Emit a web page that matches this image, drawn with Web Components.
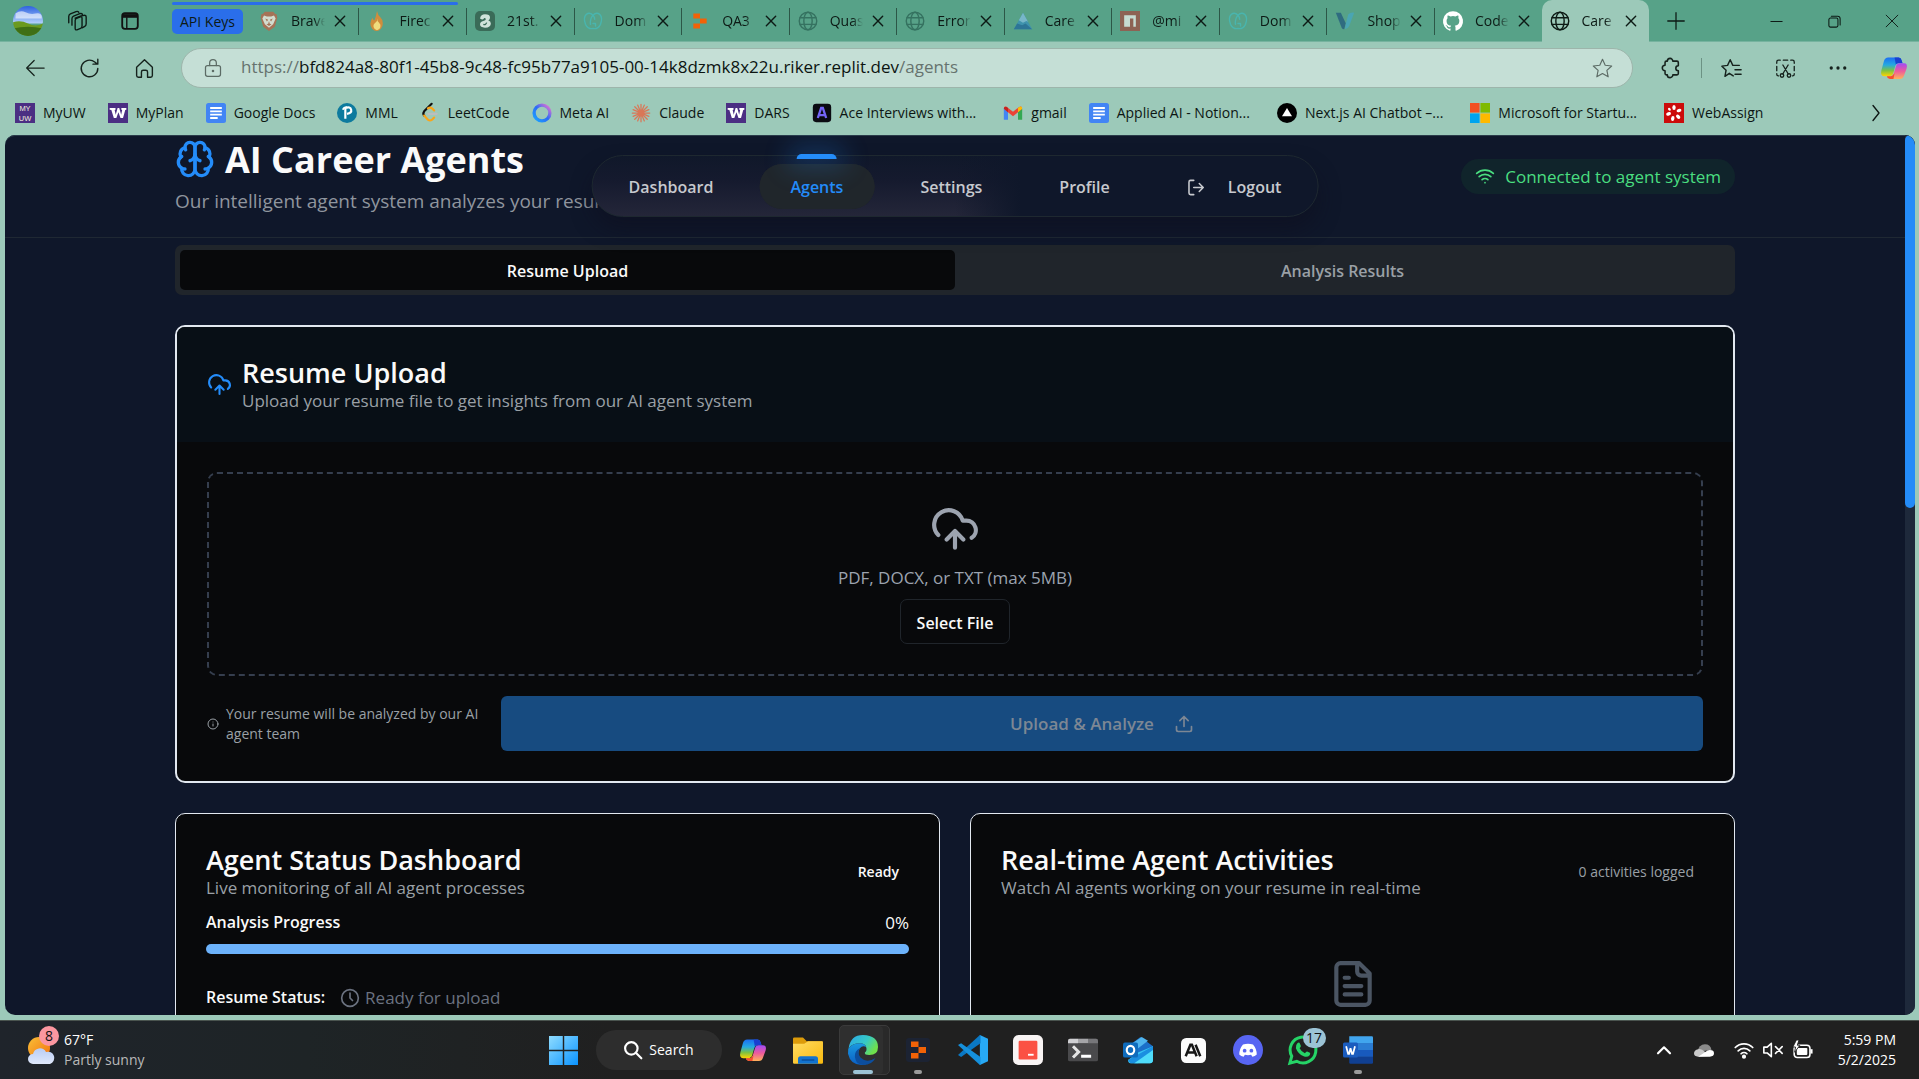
<!DOCTYPE html>
<html lang="en">
<head>
<meta charset="utf-8">
<title>AI Career Agents</title>
<style>
  html, body { margin: 0; height: 100%; }
  body { font-family: "Open Sans", "Noto Sans", sans-serif; font-size: 14px; background: #9cc9b9; overflow: hidden; }
</style>
</head>
<body>
<desktop-shell></desktop-shell>
<script>
const line = (body, w = 2, vb = '0 0 24 24') =>
  `<svg viewBox="${vb}" fill="none" stroke="currentColor" stroke-width="${w}" stroke-linecap="round" stroke-linejoin="round">${body}</svg>`;
const fill = (body, vb = '0 0 24 24') => `<svg viewBox="${vb}">${body}</svg>`;

const copilot = `<defs><linearGradient id="a" x1="0" y1="0" x2="0" y2="1"><stop offset="0" stop-color="#1b6ef3"/><stop offset=".4" stop-color="#25a9e0"/><stop offset=".7" stop-color="#7dc242"/><stop offset="1" stop-color="#ffd400"/></linearGradient>
<linearGradient id="b" x1="0" y1="0" x2="0" y2="1"><stop offset="0" stop-color="#a24bf5"/><stop offset=".5" stop-color="#ee5b9b"/><stop offset="1" stop-color="#ffb35a"/></linearGradient></defs>
<path d="M7 3h9q2 0 2.600 2.500l.7 2.500h-3.500q-2 0-2.700 2.300l-1.700 6q-.9 2.700-3.400 2.700H3.500Q0 19 1.200 14L3.400 6Q4.200 3 7 3z" fill="url(#a)"/>
<path d="M12.500 3H16q2 0 2.600 2.500l.7 2.500h-3.500q-1.500 0-2.200 1.200z" fill="#1a3fd0"/>
<path d="M17 21.500H8.500q-2 0-2.600-2.500h3.200q2 0 2.700-2.300l1.800-6Q14.400 8 17 8h3.500Q24 8 22.800 12.500l-2.200 6Q19.800 21.500 17 21.500z" fill="url(#b)"/>
<path d="M5.900 19q.6 2.500 2.600 2.500h3l1-5-1 1q-.8 1.500-2.400 1.500z" fill="#f4502e"/>`;

const ICONS = {
  brain: line('<path d="M12 5a3 3 0 1 0-5.997.125 4 4 0 0 0-2.526 5.770 4 4 0 0 0 .556 6.588A4 4 0 1 0 12 18Z"/><path d="M12 5a3 3 0 1 1 5.997.125 4 4 0 0 1 2.526 5.770 4 4 0 0 1-.556 6.588A4 4 0 1 1 12 18Z"/><path d="M15 13a4.500 4.500 0 0 1-3-4 4.500 4.500 0 0 1-3 4"/><path d="M17.599 6.500a3 3 0 0 0 .399-1.375M6.003 5.125A3 3 0 0 0 6.401 6.500M3.477 10.896a4 4 0 0 1 .585-.396M19.938 10.500a4 4 0 0 1 .585.396M6 18a4 4 0 0 1-1.967-.516M19.967 17.484A4 4 0 0 1 18 18"/>'),
  cloudup: line('<path d="M12 13v8M4 14.899A7 7 0 1 1 15.710 8h1.790a4.500 4.500 0 0 1 2.500 8.242M8 17l4-4 4 4"/>'),
  upload: line('<path d="M21 15v4a2 2 0 0 1-2 2H5a2 2 0 0 1-2-2v-4M17 8l-5-5-5 5M12 3v12"/>'),
  info: line('<circle cx="12" cy="12" r="10"/><path d="M12 16v-4M12 8h.01"/>'),
  clock: line('<circle cx="12" cy="12" r="10"/><path d="M12 6v6l3 3"/>'),
  file: line('<path d="M15 2H6a2 2 0 0 0-2 2v16a2 2 0 0 0 2 2h12a2 2 0 0 0 2-2V7ZM14 2v4a2 2 0 0 0 2 2h4M10 9H8M16 13H8M16 17H8"/>'),
  wifi: line('<path d="M12 20h.01M2 8.820a15 15 0 0 1 20 0M5 12.859a10 10 0 0 1 14 0M8.500 16.429a5 5 0 0 1 7 0"/>'),
  logout: line('<path d="M9 21H5a2 2 0 0 1-2-2V5a2 2 0 0 1 2-2h4M16 17l5-5-5-5M21 12H9"/>'),
  avatar: fill('<defs><linearGradient id="s" x1="0" y1="0" x2="0" y2="1"><stop offset="0" stop-color="#2d62e0"/><stop offset="1" stop-color="#b5d2fb"/></linearGradient><clipPath id="c"><circle cx="12" cy="12" r="12"/></clipPath></defs><g clip-path="url(#c)"><path d="M0 0h24v14H0z" fill="url(#s)"/><path d="M2 6q4-3 8-1t8 1 5 2v2H2zM5 9q6-2 10 0z" fill="#fff" opacity=".6"/><path d="M0 13q6-2 12 1t12 0v10H0z" fill="#6b9a1f"/><path d="M0 18q12-3 24 0v6H0z" fill="#3f6f15"/></g>'),
  stack: line('<path d="M10 9 16.500 6.500l3-.7q2.500-.3 2.500 2V15q0 2-1.500 2.800l-3 1.700"/><path d="M6.500 16.500V9.500q0-2 1.800-2.800L15 4q2-.7 3 .8M3 14V7q0-2 1.800-2.800L11 1.700q2-.7 3 .8"/><path d="M10 11.500q0-1.800 1.600-2.400l4-1.500q1.900-.6 1.900 1.400v8.500q0 1.800-1.600 2.500l-4 1.600Q10 22.200 10 20.200z"/>', 1.500),
  panel: fill('<rect x="3.500" y="3.500" width="17" height="17" rx="3" fill="none" stroke="#111" stroke-width="2"/><path d="M3.500 4.500h17v4h-17z" fill="#111"/><path d="M8.500 8v12" stroke="#111" stroke-width="1.500"/>'),
  x: line('<path d="M4 4l16 16M20 4 4 20"/>', 2.400),
  plus: line('<path d="M12 1v22M1 12h22"/>', 1.700),
  min: line('<path d="M3 12h18"/>', 1.700),
  restore: line('<rect x="3" y="6.500" width="14.500" height="14.500" rx="2.500"/><path d="M7 3.500h10q4 0 4 4v10"/>', 1.700),
  winx: line('<path d="M2 2l20 20M22 2 2 22"/>', 1.600),
  back: line('<path d="M23 12H2M11 3 2 12l9 9"/>', 1.500),
  reload: line('<path d="M21.500 12a9.500 9.500 0 1 1-3.500-7.400L21 7M21.500 1.500V7H16"/>', 1.600),
  home: line('<path d="M3 10.500 12 2l9 8.500V20q0 2-2 2h-3.500v-6q0-2-2-2h-3q-2 0-2 2v6H5q-2 0-2-2z"/>', 1.600),
  lock: line('<rect x="3" y="9" width="18" height="13" rx="2.500"/><path d="M8 9V6a4 4 0 0 1 8 0v3"/><circle cx="12" cy="15.500" r=".8" fill="currentColor"/>', 1.500),
  star: line('<path d="M12 1.500 15.100 8.300l7.400.8-5.500 5 1.500 7.400L12 17.800l-6.500 3.700L7 14.100l-5.500-5 7.400-.8z"/>', 1.300),
  puzzle: line('<path d="M8 4.500a3 3 0 0 1 6 0h4.500q1.500 0 1.500 1.500v3.500a2.700 2.700 0 1 0 0 5.500V18q0 1.500-1.500 1.500H14a3 3 0 0 1-6 0H7q-1.500 0-1.500-1.500v-3a3 3 0 0 1 0-6V6q0-1.500 1.500-1.500z"/>', 1.700),
  favs: line('<path d="M14 20.500 9.500 17.500 4.500 21l1.300-7L1 9.300l6.500-.9L10.500 2l3 6.400H21M16 13.500h7M16 18.500h7"/>', 1.600),
  snip: line('<path d="M2 6V4.500Q2 2.500 4 2.500h2M9.500 2.500h5M18 2.500h2q2 0 2 2V6M22 9.500v5M2 9.500v5M2 18v.5q0 2 2 2M22 18v.5q0 2-2 2M9 8l6 10M15 8 9 18"/><circle cx="8" cy="20" r="2"/><circle cx="16" cy="20" r="2"/>', 1.500),
  dots: fill('<g fill="#16221d"><circle cx="3" cy="12" r="2.200"/><circle cx="12" cy="12" r="2.200"/><circle cx="21" cy="12" r="2.200"/></g>'),
  copilot: fill(copilot),
  chevron: line('<path d="M8 2l8 10-8 10"/>', 1.800),
  globe: line('<circle cx="12" cy="12" r="10.500"/><ellipse cx="12" cy="12" rx="5" ry="10.500"/><path d="M2.500 8h19M2.500 16h19"/>', 1.700),
  brave: fill('<path d="M7 1h10l2.500 2.500H21L22 8l-3 11-7 5-7-5L2 8l1-4.500h1.500z" fill="#a57357"/><path d="M6 5.500l3.500 1h5l3.500-1L20 9l-3 7-2.500 2L12 20l-2.500-2L7 16 4 9z" fill="#d3ddd0"/><path d="M7.500 9l3.500 1.500-1.500 2zM16.500 9 13 10.500l1.500 2zM12 12l1 3.500h-2zM9 16l3-1 3 1-3 2z" fill="#a57357"/>'),
  fire: fill('<path d="M12 0q1 5 4 7.500t3 7.500a7.500 9 0 0 1-15 0q0-4 3-7 0 3 2 3 2-5 3-11z" fill="#cf8d3c"/><path d="M12 9q0 3 2.500 5t1.500 5.500-4 3.500-4-3.500T10 14t2-5z" fill="#f0dc7d"/>'),
  d21: fill('<rect width="24" height="24" rx="6" fill="#3a6b58"/><path d="M6 9q1-5 6-5 6 0 6 4 0 2-2 3.500 3 .5 3 3.500 0 5-7 5-6 0-6-4 0-3 4-4 3-.5 3-2t-2-1.500q-1 3-5 .5z" fill="#cfe3da"/><path d="M10 16q3 1 4-2" stroke="#3a6b58" stroke-width="1.500" fill="none"/>'),
  godaddy: line('<path d="M12 21Q6 22 3 16 0 8 4 4q4-3 8 1 2 2 2 5M12 21q6 1 9-5 3-8-1-12-4-3-8 1-4 5-3 11"/><path d="M12 15h3v3"/>', 1.700),
  replit: fill('<g fill="#f26207"><path d="M4 3h8v6H4zM12 9h8v6h-8zM4 15h8v6H4z"/></g>'),
  tri: fill('<path d="M12 2 23 22H1z" fill="#3f93ad"/><path d="M12 2 7 11l5 3 4-2 2 1z" fill="#77b6c9"/><path d="M1 22 5 15l6 2 4-2 8 7z" fill="#2d7596"/>'),
  npm: fill('<rect width="24" height="24" fill="#8d6354"/><path d="M5 5h14v14h-3V9h-4v10H5z" fill="#c6dcd2"/>'),
  vee: fill('<path d="M1 2h6l6 13-2 7q-2 0-3-2z" fill="#2f6c80"/><path d="M13 15 16 4q3-3 7-2l-6 16q-2 4-5 4z" fill="#4aa5b3"/>'),
  github: fill('<path fill="#fff" d="M12 .3a12 12 0 0 0-3.800 23.400c.6.100.8-.3.800-.6v-2c-3.300.7-4-1.600-4-1.600-.6-1.400-1.400-1.800-1.400-1.800-1-.7.100-.7.100-.7 1.200 0 1.900 1.200 1.900 1.200 1 1.800 2.800 1.300 3.500 1 0-.8.400-1.300.7-1.600-2.700-.3-5.500-1.300-5.500-6 0-1.200.5-2.300 1.300-3.100-.2-.4-.6-1.600 0-3.200 0 0 1-.3 3.400 1.200a11.500 11.500 0 0 1 6 0c2.300-1.500 3.300-1.200 3.300-1.200.6 1.600.2 2.800 0 3.200.9.800 1.300 1.900 1.300 3.200 0 4.600-2.800 5.600-5.500 5.900.5.400.9 1 .9 2.200v3.300c0 .3.100.7.800.6A12 12 0 0 0 12 .3"/>'),
  uw: fill('<rect width="24" height="24" fill="#4b2e83"/><g font-size="9" fill="#f3eedd" text-anchor="middle" font-family="Liberation Sans"><text x="12" y="10">MY</text><text x="12" y="21">UW</text></g>'),
  w: fill('<rect width="24" height="24" fill="#4b2e83"/><path d="M2 6h7v2l-1 .3 1.300 5.700L11.500 6h2l2.300 8 1.200-5.700L16 8V6h6v2l-1.300.4L18 18h-3l-2.500-7L10 18H7L4 8.400 2 8z" fill="#fff"/>'),
  docs: fill('<rect width="24" height="24" rx="3" fill="#4285f4"/><path d="M5 6h14M5 10h14M5 14h14M5 18h9" stroke="#fff" stroke-width="2.200"/>'),
  pearson: fill('<circle cx="12" cy="12" r="12" fill="#0d7a9e"/><path d="M10 19V6q6-2 7 2t-5 5" fill="none" stroke="#fff" stroke-width="2.600"/><path d="M7 8q1-3 5-3" stroke="#fff" stroke-width="2" fill="none"/>'),
  leet: fill('<g fill="none" stroke-width="2.600" stroke-linecap="round"><path d="M14 1 5 10q-2 2.500 0 5" stroke="#111"/><path d="M5 15l4.500 5q2.500 2 5 0l2.500-2.500M17 9l-2.500-2.500q-2.500-2-5 0" stroke="#f9a51a"/><path d="M10 13h10" stroke="#bdbdbd"/></g>'),
  meta: fill('<defs><linearGradient id="m" x1="0" y1="1" x2="1" y2="0"><stop offset="0" stop-color="#1aa7ff"/><stop offset=".5" stop-color="#2a6cf6"/><stop offset="1" stop-color="#f472d0"/></linearGradient></defs><circle cx="12" cy="12" r="9.500" fill="none" stroke="url(#m)" stroke-width="4"/>'),
  claude: fill('<g stroke="#d97757" stroke-width="1.500" stroke-linecap="round"><path d="M12 1.500v21M1.500 12h21M4.500 4.500l15 15M19.500 4.500l-15 15M8 2.500l8 19M16 2.500 8 21.500M2.500 8l19 8M21.500 8l-19 8"/></g>'),
  ace: fill('<rect x="1" y="1" width="22" height="22" rx="4" fill="#0b0b12"/><path d="M7 18l4-12h2l4 12M9 14.500h6" fill="none" stroke="#7464f5" stroke-width="2.800"/>'),
  gmail: fill('<path d="M1 7v13h5V10z" fill="#4285f4"/><path d="M23 7v13h-5V10z" fill="#34a853"/><path d="M1 7q0-4 4-2l7 5.500L19 5q4-2 4 2l-5 4-6 5-6-5z" fill="#ea4335"/><path d="M18 6l1-1q4-2 4 2l-5 4z" fill="#fbbc04"/><path d="M1 7q0-3 3-2.500L6 6v5z" fill="#c5221f"/>'),
  next: fill('<circle cx="12" cy="12" r="12" fill="#000"/><path d="M12 6l6 10H6z" fill="#fff"/>'),
  ms: fill('<path d="M0 0h11.500v11.500H0z" fill="#f25022"/><path d="M12.500 0H24v11.500H12.500z" fill="#7fba00"/><path d="M0 12.500h11.500V24H0z" fill="#00a4ef"/><path d="M12.500 12.500H24V24H12.500z" fill="#ffb900"/>'),
  wa: fill('<rect width="24" height="24" fill="#cc0a0a"/><g fill="#fff"><ellipse cx="12" cy="5.500" rx="2" ry="3"/><ellipse cx="18" cy="9" rx="3" ry="2" transform="rotate(-20 18 9)"/><ellipse cx="17" cy="16.500" rx="3" ry="2" transform="rotate(45 17 16.500)"/><ellipse cx="10.500" cy="18.500" rx="2" ry="3" transform="rotate(10 10.500 18.500)"/><ellipse cx="5.500" cy="13" rx="3" ry="2" transform="rotate(-20 5.500 13)"/><ellipse cx="6.500" cy="7.500" rx="1.500" ry="2" transform="rotate(-40 6.500 7.500)"/></g>'),
  weather: fill('<defs><linearGradient id="sun" x1="0" y1="0" x2="1" y2="1"><stop offset="0" stop-color="#f9c037"/><stop offset="1" stop-color="#f2700f"/></linearGradient><linearGradient id="cl" x1="0" y1="0" x2="0" y2="1"><stop offset="0" stop-color="#b9cdf5"/><stop offset="1" stop-color="#dfe8fb"/></linearGradient></defs><circle cx="12" cy="12" r="11" fill="url(#sun)"/><path d="M6 28a5 5 0 0 1 0-10 7 7 0 0 1 13-2 6 6 0 0 1 4 12z" fill="url(#cl)"/>', '0 0 28 28'),
  start: fill('<defs><linearGradient id="st" x1="0" y1="0" x2="1" y2="1"><stop offset="0" stop-color="#8fdcff"/><stop offset="1" stop-color="#0a93ff"/></linearGradient></defs><path d="M0 0h11.400v11.400H0zM12.600 0H24v11.400H12.600zM0 12.600h11.400V24H0zM12.600 12.600H24V24H12.600z" fill="url(#st)"/>'),
  search: line('<circle cx="10" cy="10" r="7.500"/><path d="M16 16l6 6"/>', 2.600),
  folder: fill('<defs><linearGradient id="fo" x1="0" y1="0" x2="1" y2="1"><stop offset="0" stop-color="#ffdc63"/><stop offset="1" stop-color="#f8b90e"/></linearGradient></defs><path d="M0 3q0-1 1-1h7l3 3h12q1 0 1 1v6H0z" fill="#dc9b0a"/><path d="M0 7h9l3-2h11q1 0 1 1v16q0 1-1 1H1q-1 0-1-1z" fill="url(#fo)"/><path d="M4 23v-4q0-2 2-2h12q2 0 2 2v4z" fill="#1273cf"/><path d="M7 20h10" stroke="#0a4f9c" stroke-width="1.200"/>'),
  edge: fill('<defs><linearGradient id="e1" x1="0" y1="0" x2="1" y2=".5"><stop offset="0" stop-color="#2aa6e8"/><stop offset=".6" stop-color="#36c9c6"/><stop offset="1" stop-color="#6fe04c"/></linearGradient><linearGradient id="e2" x1="0" y1="0" x2="0" y2="1"><stop offset="0" stop-color="#1a9ae0"/><stop offset="1" stop-color="#0b5fc4"/></linearGradient></defs><path d="M.5 10.500Q2 0 12 0q12 .5 12 9.500 0 6.500-7 6.500-4 0-3.500-2 2-1.500 1-4.500-1-3-5-3-6 0-9 4z" fill="url(#e1)"/><path d="M.2 11Q3 6.500 9.500 6.500q4 0 5 3-3-1.200-5 1-3 4.500 1 9 2.500 2.500 6 2.500-2.500 2-5.500 2-9 0-11-9z" fill="url(#e2)"/><path d="M9.500 10.500q-2.500 4 .5 7.500 5 5 12 .4-3 5.600-9.500 5.600-6 0-7-6.500-.4-5 4-7z" fill="#0c4e9e"/>'),
  replitbig: fill('<rect width="24" height="24" rx="3" fill="#1c2333"/><path d="M5 3.500h7.500v5.500H5zM12.500 9h7.500v6h-7.500zM5 15h7.500v5.500H5z" fill="#f26207"/>'),
  vscode: fill('<path d="M17.500 0 24 3v18l-6.500 3z" fill="#27a9f5"/><path d="M0 16l2.500 1.500L18 6.500V0h-.5z" fill="#0a78c4"/><path d="M0 8l2.500-1.500L18 17.500V24h-.5z" fill="#1590dc"/>'),
  red: fill('<rect width="24" height="24" rx="4.500" fill="#f8f4f4"/><rect x="4.500" y="4.500" width="15" height="15" rx="1" fill="#fb5144"/><path d="M12 15.800h4.500" stroke="#fff" stroke-width="1.500"/>'),
  term: fill('<rect y="3" width="24" height="18" rx="1.500" fill="#4a4a4c"/><path d="M0 6.500V4.500Q0 3 1.500 3H8v3.500z" fill="#cfcfd2"/><path d="M8 3h8v3.500H8z" fill="#a5a5a8"/><path d="M16 3h6.500Q24 3 24 4.500v2h-8z" fill="#77777a"/><path d="M4 9l4.500 4.500L4 18" fill="none" stroke="#e5e5e5" stroke-width="2.400"/><path d="M10.500 17h8" stroke="#fff" stroke-width="2.400"/>'),
  outlook: fill('<path d="M4 9 14 1.500 24 9v3L10 16z" fill="#1b6fc9"/><path d="M7 7l8-5.500 5 3L9 13z" fill="#4fb4ee"/><path d="M24 9v11q0 2.500-2.500 2.500H6Q4 22.500 4 20l8-6z" fill="#36c3f3"/><path d="M24 9v4l-12 9.500H6L4 20z" fill="#1a8fe0"/><path d="M24 12v8q0 2.500-2.500 2.500H9z" fill="#4fdcfa"/><rect y="6" width="12" height="12" rx="1.500" fill="#0f6cbd"/><ellipse cx="6" cy="12" rx="3" ry="3.300" fill="none" stroke="#fff" stroke-width="1.700"/>'),
  anth: fill('<rect width="24" height="24" rx="5" fill="#fbfbfb"/><path d="M4.500 17.500 9 6.500h1.500l4.500 11M6.500 14h6.500M14 6.500l4.500 11" fill="none" stroke="#161616" stroke-width="2.400"/>'),
  discord: fill('<circle cx="12" cy="12" r="12" fill="#5865f2"/><path d="M8 7.500q4-1 8 0 3 3.500 3 8-1.500 1.500-3.500 1.800l-1-1.500q-2.500.6-5 0l-1 1.500Q6.500 17 5 15.500q0-4.500 3-8z" fill="#fff"/><circle cx="9.300" cy="12.500" r="1.500" fill="#5865f2"/><circle cx="14.700" cy="12.500" r="1.500" fill="#5865f2"/>'),
  whatsapp: fill('<path d="M1.500 22.500 3 17A10.300 10.300 0 1 1 7 21z" fill="none" stroke="#25d366" stroke-width="2.400"/><path d="M7.500 6.500q1.500-1 2 .3l.8 2q0 .7-1 1.700 1.500 3 4.200 4 1.300-1.500 1.800-1.300l2.200 1q.7.5-.2 2-1.800 2-4.800.8-4.500-2-6.200-6.500-.4-2.500 1.200-4z" fill="#25d366"/>'),
  word: fill('<path d="M5 1h18q1 0 1 1v5H5z" fill="#41a5ee"/><path d="M5 6.500h19V12H5z" fill="#2b7cd3"/><path d="M5 12h19v5.500H5z" fill="#185abd"/><path d="M5 17.500h19V22q0 1-1 1H6q-1 0-1-1z" fill="#103f91"/><rect y="6" width="12" height="12" rx="1.200" fill="#1b5cbe"/><path d="M2.500 9l1.600 6h.8L6 10.500 7.200 15H8l1.600-6" fill="none" stroke="#fff" stroke-width="1.400"/>'),
  up: line('<path d="M3 17l9-9 9 9"/>', 3.200),
  onedrive: fill('<path d="M4 14Q6 5 13 5t8 7z" fill="#8a8a8a"/><path d="M5 20Q0 20 0 16t5-5q4-1 8 3l8 5z" fill="#c9c9c9"/><path d="M5 20h14q5 0 5-4t-5-4q-3 0-5 2z" fill="#fff"/>'),
  traywifi: line('<path d="M1.500 9a15 15 0 0 1 21 0M5 13a10 10 0 0 1 14 0M8.500 16.500a5 5 0 0 1 7 0"/><circle cx="12" cy="20" r="1.500" fill="currentColor"/>', 2),
  mute: line('<path d="M1 8.500h4l5-4.500v16l-5-4.500H1zM15 8l8 8M23 8l-8 8"/>', 1.900),
  battery: fill('<rect x="2.500" y="6" width="18" height="14" rx="3.500" fill="none" stroke="#fff" stroke-width="1.800"/><rect x="5.500" y="9" width="12" height="8" rx="1" fill="#fff"/><path d="M21 10.500h2.500v5H21z" fill="#fff"/><path d="M5 0 1 8h3l-1 6 6-8H6l2-6z" fill="#fff" stroke="#202020"/>')
};

function define(name, markup, css) {
  const tpl = document.createElement('template');
  customElements.define(name, class extends HTMLElement {
    connectedCallback() {
      if (this.shadowRoot) return;
      const body = typeof markup === 'function' ? markup(this) : markup;
      tpl.innerHTML = `<style>*{box-sizing:border-box}button{font:inherit;color:inherit;background:none;border:0;padding:0;margin:0}a{color:inherit;text-decoration:none}h1,h2,p{margin:0}${css}</style>${body}`;
      this.attachShadow({ mode: 'open' }).append(tpl.content.cloneNode(true));
    }
  });
}
const icon = (name, size) => `<ui-icon name="${name}" style="--size:${size}px"></ui-icon>`;

define('ui-icon', el => ICONS[el.getAttribute('name')],
  `:host{display:block;flex:none;width:var(--size);height:var(--size)} svg{display:block;width:100%;height:100%;overflow:visible}`);

/* ---------- browser chrome ---------- */
define('browser-tab', el => `
  ${icon(el.getAttribute('icon'), 20)}
  <span class="t"><slot></slot></span>
  <button aria-label="Close tab">${icon('x', 14)}</button>`,
  `:host{display:flex;align-items:center;flex:0 1 108px;min-width:0;height:100%;padding:0 11px 0 8px;color:#0d1a15;box-sizing:border-box}
   :host([dim]) > ui-icon{color:#357260}
   :host([teal]) > ui-icon{color:#49b5ae}
   :host([active]){background:#9cc9b9;border-radius:10px 10px 0 0}
   .t{flex:1;min-width:0;margin:0 8px 0 12px;overflow:hidden;white-space:nowrap;line-height:20px;-webkit-mask:linear-gradient(90deg,#000 68%,transparent 100%);mask:linear-gradient(90deg,#000 68%,transparent 100%)}
   :host(:not([active]):not([first])){border-left:1px solid transparent;border-image:linear-gradient(transparent 9px,#2c5747 9px,#2c5747 34px,transparent 34px) 1}`);

const TABS = [['brave','Brave','first'],['fire','Firec',''],['d21','21st.',''],['godaddy','Dom','teal'],['replit','QA3',''],['globe','Quas','dim'],['globe','Error','dim'],['tri','Care',''],['npm','@mi',''],['godaddy','Dom','teal'],['vee','Shop',''],['github','Code',''],['globe','Care','active']];
define('tab-strip', `
  <button class="b a" aria-label="Profile">${icon('avatar', 30)}</button>
  <button class="b" aria-label="Workspaces">${icon('stack', 22)}</button>
  <button class="b" aria-label="Tab actions">${icon('panel', 22)}</button>
  <div class="tabs"><span class="line"></span><button class="group">API Keys</button>${TABS.map(t => `<browser-tab icon="${t[0]}" ${t[2]}>${t[1]}</browser-tab>`).join('')}</div>
  <button class="new" aria-label="New tab">${icon('plus', 18)}</button>
  <div class="win"><button aria-label="Minimize">${icon('min', 15)}</button><button aria-label="Restore">${icon('restore', 15)}</button><button aria-label="Close">${icon('winx', 14)}</button></div>`,
  `:host{display:flex;align-items:center;height:42px;background:#57a288;padding-left:13px;color:#0d1a15;box-shadow:inset 0 -1px #76b39f}
   .b{margin-right:31px} .b.a{margin-right:23px}
   .tabs{display:flex;align-items:center;height:42px;flex:0 1 1477px;position:relative;min-width:0}
   .line{position:absolute;left:0;top:2px;width:286px;height:3px;border-radius:2px;background:#2a6eea}
   .group{background:#2a6eea;border-radius:5px;height:25px;padding:0 8px;margin-right:8px;white-space:nowrap;line-height:25px}
   .new{margin-left:18px}
   .win{display:flex;gap:43px;margin-left:auto;padding-right:20px}`);

define('address-bar', `
  <div class="nav"><button aria-label="Back">${icon('back', 20)}</button><button aria-label="Refresh">${icon('reload', 21)}</button><button aria-label="Home">${icon('home', 21)}</button></div>
  <div class="url">${icon('lock', 20)}<a href="#"><i>https://</i>bfd824a8-80f1-45b8-9c48-fc95b77a9105-00-14k8dzmk8x22u.riker.replit.dev<i>/agents</i></a>${icon('star', 21)}</div>
  <div class="acts"><button aria-label="Extensions">${icon('puzzle', 22)}</button><span class="sep"></span><button aria-label="Favorites">${icon('favs', 21)}</button><button aria-label="Screenshot">${icon('snip', 21)}</button><button aria-label="More">${icon('dots', 18)}</button><button aria-label="Copilot">${icon('copilot', 28)}</button></div>`,
  `:host{display:flex;align-items:center;height:52px;padding:0 11px 0 25px;color:#16221d}
   .nav{display:flex;gap:34px;margin-right:26px}
   .url{flex:1;min-width:0;display:flex;align-items:center;height:40px;border:1px solid #9db5ab;border-radius:20px;background:#c5dfd6;padding:0 19px 0 21px;color:#5c6b65}
   .url a{flex:1;min-width:0;margin-left:18px;font-size:17px;line-height:22px;padding-bottom:2px;color:#0c1411;white-space:nowrap;overflow:hidden} i{font-style:normal;color:#66736e}
   .acts{display:flex;align-items:center;margin-left:27px;gap:33px} .sep{width:1px;height:20px;background:#6c9284;margin:0 -14px}`);

define('bookmark-link', el => `<a href="#">${icon(el.getAttribute('icon'), 20)}<slot></slot></a>`,
  `:host{display:block;flex:none} a{display:flex;align-items:center;gap:8px;white-space:nowrap;line-height:20px} :host([clipped]) a{padding-right:5px}`);
const MARKS = [['uw','MyUW'],['w','MyPlan'],['docs','Google Docs'],['pearson','MML'],['leet','LeetCode'],['meta','Meta AI'],['claude','Claude'],['w','DARS'],['ace','Ace Interviews with...'],['gmail','gmail'],['docs','Applied AI - Notion...'],['next','Next.js AI Chatbot –...'],['ms','Microsoft for Startu...'],['wa','WebAssign']];
define('bookmark-bar', `${MARKS.map(m => `<bookmark-link icon="${m[0]}" ${m[1].endsWith('...') ? 'clipped' : ''}>${m[1]}</bookmark-link>`).join('')}<button aria-label="More bookmarks">${icon('chevron', 18)}</button>`,
  `:host{display:flex;align-items:center;gap:22px;height:41px;padding:0 34px 4px 15px;color:#0d1613} button{margin-left:auto}`);

/* ---------- web app ---------- */
define('floating-nav', `
  <a href="#">Dashboard</a><a href="#" class="on">Agents</a><a href="#">Settings</a><a href="#">Profile</a><a href="#">${icon('logout', 19)}Logout</a>`,
  `:host{display:flex;align-items:center;gap:15px;height:62px;padding:0 5px;border:1px solid #1e2830;border-radius:31px;color:#c7c9ce;font-weight:600;font-size:16px;
     background:linear-gradient(90deg,transparent 50%,#0f172a 59%),linear-gradient(180deg,#10182a,#151a2e 40%,#242639);box-shadow:0 12px 20px rgba(14,14,30,.5)}
   a{display:flex;align-items:center;gap:22px;height:45px;padding:2px 31px 0;border-radius:23px;position:relative;white-space:nowrap}
   .on{background:#20262b;color:#248cf9}
   .on::before{content:"";position:absolute;left:50%;margin-left:-20px;top:-10px;width:40px;height:5px;border-radius:5px 5px 0 0;background:#248cf9;box-shadow:0 0 24px 10px rgba(36,140,249,.22)}
   .on::after{content:"";position:absolute;inset:0;border-radius:inherit;background:#20262b;z-index:-1}`);

define('page-header', `
  <div class="wrap"><div><h1>${icon('brain', 40)}AI Career Agents</h1><p>Our intelligent agent system analyzes your resume</p></div>
  <span class="pill">${icon('wifi', 20)}Connected to agent system</span></div>`,
  `:host{display:block;border-bottom:1px solid #1f2833;padding:2px 0 22px}
   .wrap{width:calc(100% - 60px);max-width:1560px;margin:0 auto;display:flex;align-items:center;justify-content:space-between}
   h1{display:flex;align-items:center;gap:10px;height:44px;font-size:36px;font-weight:700;color:#fafafa;white-space:nowrap} h1 ui-icon{color:#248cf9}
   p{margin-top:6px;font-size:19px;line-height:28px;color:#8f959e;white-space:nowrap}
   .pill{display:flex;align-items:center;gap:10px;height:35px;padding:0 14px;border-radius:18px;background:#10242b;color:#4ade80;font-size:17px;white-space:nowrap}`);

define('view-tabs', `<button role="tab" aria-selected="true">Resume Upload</button><button role="tab">Analysis Results</button>`,
  `:host{display:grid;grid-template-columns:1fr 1fr;padding:5px;height:50px;border-radius:7px;box-sizing:border-box;background:#20252b;font-size:16px;font-weight:600;color:#9aa0a6}
   button{border-radius:5px;padding-top:2px} [aria-selected]{background:#08090b;color:#fafafa}`);

define('upload-card', `
  <header>${icon('cloudup', 25)}<div><h2>Resume Upload</h2><p>Upload your resume file to get insights from our AI agent system</p></div></header>
  <section><div class="drop">${icon('cloudup', 50)}<p>PDF, DOCX, or TXT (max 5MB)</p><button>Select File</button></div>
  <div class="row"><p class="note">${icon('info', 12)}<span>Your resume will be analyzed by our AI agent team</span></p><button class="go" disabled>Upload &amp; Analyze${icon('upload', 20)}</button></div></section>`,
  `:host{display:block;border:2px solid #e2e8f0;border-radius:10px;background:#08090b;overflow:hidden;color:#9aa0a6;font-size:17px}
   header{display:flex;align-items:center;gap:10px;padding:30px;background:#080f16} header ui-icon{color:#248cf9}
   h2{font-size:27px;line-height:32px;font-weight:600;color:#fafafa} header p{line-height:23px}
   section{padding:30px}
   .drop{display:flex;flex-direction:column;align-items:center;padding:30px;border:2px dashed #353e4e;border-radius:10px;color:#9ca3af}
   .drop p{margin:11px 0 8px;line-height:26px}
   .drop button{height:45px;padding:2px 16px 0;border:1px solid #20252b;border-radius:7px;color:#fafafa;font-size:16px;font-weight:600}
   .row{display:flex;align-items:center;gap:20px;margin-top:20px}
   .note{display:flex;align-items:center;gap:7px;flex:0 1 274px;font-size:14px;line-height:20px}
   .go{flex:1;display:flex;align-items:center;justify-content:center;gap:20px;height:55px;border-radius:6px;background:#174b80;color:#7d8794;font-weight:600}`);

define('info-card', `<header><div><h2><slot name="title"></slot></h2><p><slot name="sub"></slot></p></div><slot name="aside"></slot></header><slot></slot>`,
  `:host{display:block;min-width:0;padding:30px;border:1px solid #e2e8f0;border-radius:10px;background:#08090b;color:#9aa0a6;font-size:17px}
   header{display:flex;align-items:center;justify-content:space-between;padding-right:10px}
   h2{font-size:27px;line-height:32px;font-weight:600;color:#fafafa} p{line-height:23px}`);

define('agents-page', `
  <div class="scroll"><page-header></page-header>
    <main><view-tabs></view-tabs><upload-card></upload-card>
      <div class="grid">
        <info-card><span slot="title">Agent Status Dashboard</span><span slot="sub">Live monitoring of all AI agent processes</span><b slot="aside" class="ready">Ready</b>
          <div class="prog"><b>Analysis Progress</b><span>0%</span></div><div class="bar" role="progressbar" aria-label="Analysis Progress"></div>
          <div class="stat"><b>Resume Status:</b>${icon('clock', 20)}<span>Ready for upload</span></div></info-card>
        <info-card><span slot="title">Real-time Agent Activities</span><span slot="sub">Watch AI agents working on your resume in real-time</span><span slot="aside" class="log">0 activities logged</span>
          <div class="empty">${icon('file', 50)}</div></info-card>
      </div></main></div>
  <floating-nav></floating-nav><div class="sb"><div></div></div>`,
  `:host{display:flex;position:relative;flex:1;min-height:0;margin:0 4px 5px 5px;overflow:hidden;border-radius:10px;background:#0f172a;box-shadow:inset 0 1px #2b3c4a}
   .scroll{flex:1;min-width:0;overflow:hidden}
   main{width:calc(100% - 60px);max-width:1560px;margin:0 auto;padding-top:7px}
   upload-card,.grid{margin-top:30px} .grid{display:grid;grid-template-columns:1fr 1fr;gap:30px}
   info-card{height:400px} b{font-size:16px;font-weight:600;color:#fafafa}
   .ready,.log{font-size:14px}
   .prog{display:flex;justify-content:space-between;margin-top:11px;line-height:25px;color:#fafafa}
   .bar{height:10px;margin-top:9px;border-radius:5px;background:#6cb2fb}
   .stat{display:flex;align-items:center;margin-top:31px;line-height:25px;color:#6b7280} .stat ui-icon{margin:0 5px 0 15px}
   .empty{display:flex;justify-content:center;margin-top:60px;color:#4b5563}
   floating-nav{position:absolute;top:20px;left:calc(50% - 5px);transform:translateX(-50%);z-index:1}
   .sb{width:10px;background:#1e293b} .sb div{height:373px;border-radius:5px;background:#248cf9}`);

/* ---------- taskbar ---------- */
const APPS = [['copilot',28],['folder',30],['edge',30,'on'],['replitbig',24,'dot'],['vscode',30],['red',30],['term',30],['outlook',30],['anth',25],['discord',30],['whatsapp',30,'badge'],['word',30,'dot']];
define('task-bar', `
  <div class="wx"><span class="wi">${icon('weather', 28)}<em>8</em></span><span>67°F<br><small>Partly sunny</small></span></div>
  <div class="mid"><button aria-label="Start">${icon('start', 29)}</button><button class="search">${icon('search', 20)}Search</button>
  <div class="apps">${APPS.map(a => `<button class="${a[2] || ''}" aria-label="${a[0]}">${icon(a[0], a[1])}${a[2] === 'badge' ? '<em>17</em>' : ''}</button>`).join('')}</div></div>
  <div class="tray">${icon('up', 16)}${icon('onedrive', 20)}${icon('traywifi', 20)}${icon('mute', 20)}${icon('battery', 21)}<time>5:59 PM<br>5/2/2025</time></div>`,
  `:host{display:grid;grid-template-columns:1fr auto 1fr;align-items:center;height:59px;box-sizing:border-box;border-top:1px solid #4a544f;background:linear-gradient(90deg,#1f242b,#1e2426 16%,#202020 32%);color:#fff;line-height:20px}
   em{position:absolute;font-style:normal;color:#111;text-align:center;border-radius:10px;height:20px;line-height:20px}
   .wx{display:flex;align-items:center;gap:9px;padding-left:27px;white-space:nowrap} small{font-size:14px;color:#b9b9b9}
   .wi{position:relative} .wi em{left:12px;top:-10px;width:20px;background:#fb97a0}
   .mid{display:flex;align-items:center;padding-left:15px}
   .search{display:flex;align-items:center;justify-content:center;gap:6px;width:126px;height:40px;margin:0 4px 0 18px;border-radius:20px;background:#2d2d2d}
   .apps{display:flex} .apps button{width:55px;height:50px;display:flex;align-items:center;justify-content:center;position:relative}
   .on::before{content:"";position:absolute;inset:0 1px 0 3px;border:1px solid #3a3a3a;border-radius:5px;box-shadow:inset -6px 0 #292929;background:#2f2f2f}
   .on ui-icon{position:relative}
   .on::after,.dot::after{content:"";position:absolute;left:50%;bottom:1px;width:20px;height:4px;margin-left:-10px;border-radius:2px;background:#9cc3d5}
   .dot::after{width:8px;margin-left:-4px;background:#9a9a9a}
   .badge em{left:27px;top:3px;width:23px;background:#9cc3d5}
   .tray{display:flex;align-items:center;justify-content:flex-end;padding-right:23px}
   .tray ui-icon{margin-right:9px} .tray ui-icon:nth-child(1){margin-right:22px} .tray ui-icon:nth-child(2){margin-right:20px}
   time{width:74px;text-align:right;white-space:nowrap}`);

define('desktop-shell', `<tab-strip></tab-strip><address-bar></address-bar><bookmark-bar></bookmark-bar><agents-page></agents-page><task-bar></task-bar>`,
  `:host{display:flex;flex-direction:column;height:100vh;overflow:hidden;background:#9cc9b9}`);
</script>
</body>
</html>
